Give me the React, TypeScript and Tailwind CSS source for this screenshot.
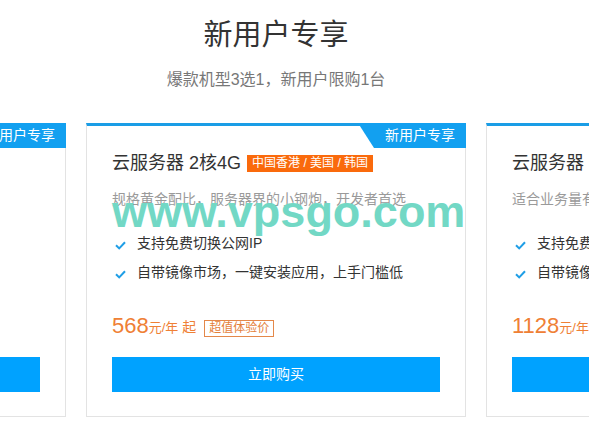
import React from "react";

const FONT = { fontFamily: '"Liberation Sans", "Noto Sans CJK SC", sans-serif' };

type CardData = {
  spec: string;
  tag: string;
  desc: string;
  features: string[];
  price: string;
};

const cards: CardData[] = [
  {
    spec: "1核2G",
    tag: "中国香港 / 美国 / 韩国",
    desc: "入门级配置，个人建站、学习开发必备",
    features: ["支持免费切换公网IP", "自带镜像市场，一键安装应用系统"],
    price: "288",
  },
  {
    spec: "2核4G",
    tag: "中国香港 / 美国 / 韩国",
    desc: "规格黄金配比，服务器界的小钢炮，开发者首选",
    features: ["支持免费切换公网IP", "自带镜像市场，一键安装应用，上手门槛低"],
    price: "568",
  },
  {
    spec: "4核8G",
    tag: "中国香港 / 美国 / 韩国",
    desc: "适合业务量有一定规模的企业用户使用",
    features: ["支持免费切换公网IP", "自带镜像市场，一键安装应用，上手门槛低"],
    price: "1128",
  },
];

function Check() {
  return (
    <svg width="11" height="9" viewBox="0 0 11 9" className="mt-[3px] shrink-0">
      <polyline points="1,4.2 4.2,7.4 10,1.2" fill="none" stroke="#1f9ee6" strokeWidth="2" />
    </svg>
  );
}

function Card({ d }: { d: CardData }) {
  return (
    <div className="relative w-[380px] shrink-0 border border-[#e3e3e3] border-t-[3px] border-t-[#1a9de6] bg-white px-[25px] pt-[25px] pb-[24px]">
      <div
        className="absolute top-[-3px] right-[-1px] h-[25px] w-[108px] bg-[#12a0f0] pl-[16px] flex items-center justify-center text-white text-[14px]"
        style={{ clipPath: "polygon(0 0, 100% 0, 100% 100%, 16px 100%)" }}
      >
        新用户专享
      </div>
      <div className="flex items-center h-[24px]">
        <span className="text-[18px] text-[#333] leading-[24px]">云服务器 {d.spec}</span>
        <span className="ml-[6px] h-[17px] px-[5px] bg-[#fa6a0c] text-white text-[12px] leading-[17px]">{d.tag}</span>
      </div>
      <div className="mt-[14px] h-[20px] leading-[20px] text-[14px] text-[#9a9a9a] whitespace-nowrap">{d.desc}</div>
      <div className="mt-[20px]">
        {d.features.map((f) => (
          <div key={f} className="h-[29px] flex items-center whitespace-nowrap">
            <span className="ml-[3px] mr-[11px] flex"><Check /></span>
            <span className="text-[14px] text-[#333]">{f}</span>
          </div>
        ))}
      </div>
      <div className="mt-[24px] h-[30px] flex items-center whitespace-nowrap">
        <span className="text-[22px] text-[#ef8035] leading-[30px]">{d.price}</span>
        <span className="text-[13px] text-[#ef8035] mt-[4px]">元/年</span>
        <span className="ml-[4px] text-[14px] text-[#ef8035] mt-[3px]">起</span>
        <span className="ml-[8px] mt-[4px] h-[17px] border border-[#e4884a] px-[4px] text-[12px] leading-[15px] text-[#e4803a]">超值体验价</span>
      </div>
      <div className="mt-[16px] h-[35px] bg-[#00a2ff] flex items-center justify-center text-white text-[14px]">立即购买</div>
    </div>
  );
}

export default function App() {
  return (
    <div className="relative w-[589px] h-[442px] overflow-hidden bg-white" style={FONT}>
      <div className="w-[1180px] ml-[-314px]">
        <div className="pt-[15px] text-center text-[29px] leading-[40px] text-[#333]">新用户专享</div>
        <div className="mt-[13px] text-center text-[16px] leading-[24px] text-[#777]">爆款机型3选1，新用户限购1台</div>
        <div className="mt-[31px] flex gap-[20px]">
          {cards.map((c) => (
            <Card key={c.price} d={c} />
          ))}
        </div>
      </div>
      <div
        className="absolute left-[112px] top-[189px] text-[45px] leading-[45px] font-bold text-[#72d8c5] whitespace-nowrap pointer-events-none"
        style={{ fontFamily: '"Liberation Sans", sans-serif' }}
      >
        www.vpsgo.com
      </div>
    </div>
  );
}
